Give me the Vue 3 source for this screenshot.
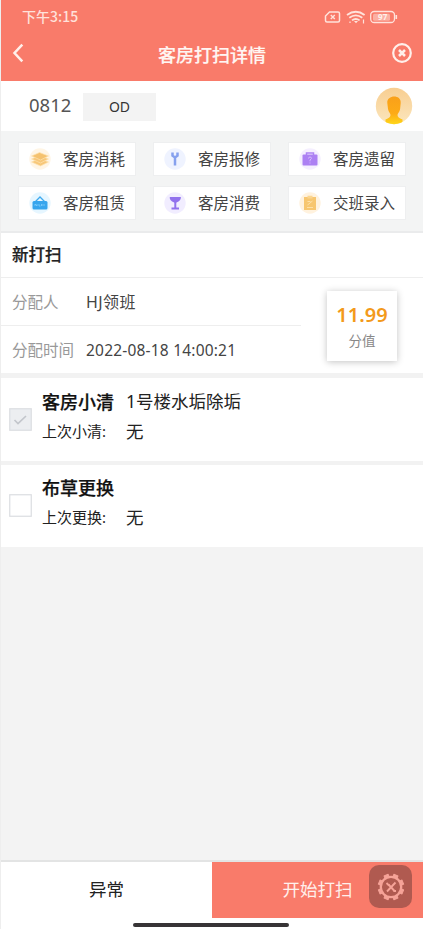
<script setup>
const actions = [
  { label: '客房消耗', icon: 'layers', tint: '#fff5e5' },
  { label: '客房报修', icon: 'wrench', tint: '#eff3ff' },
  { label: '客房遗留', icon: 'bag', tint: '#f5efff' },
  { label: '客房租赁', icon: 'rent', tint: '#e6f6ff' },
  { label: '客房消费', icon: 'glass', tint: '#f1edff' },
  { label: '交班录入', icon: 'note', tint: '#fff2de' },
]
const tasks = [
  { title: '客房小清', detail: '1号楼水垢除垢', last: '上次小清:', value: '无', checked: true },
  { title: '布草更换', detail: '', last: '上次更换:', value: '无', checked: false },
]
const teeth = [0, 45, 90, 135, 180, 225, 270, 315]
</script>

<template>
  <div class="screen">
    <header class="header">
      <div class="status">
        <span class="clock">下午3:15</span>
        <svg class="status-icons" width="74" height="16" viewBox="0 0 74 16" fill="none" stroke="#ffe3dc">
          <path d="M5.500 3H14q1.500 0 1.500 1.500v7q0 1.500-1.500 1.500H3q-1.500 0-1.500-1.500V7z" stroke-width="1.500" />
          <path d="m6.800 6 4 4m0-4-4 4" stroke-width="1.400" />
          <path d="M23 6q8.800-6.500 17.600 0M25.300 8.800q6.500-4.800 13 0M28 11.400q3.800-2.800 7.600 0" stroke-width="1.800" />
          <path d="m30 12 2 2.300 2-2.300z" fill="#ffe3dc" stroke="none" />
          <path d="M39.500 10.500v4M26 12.500v1.500" stroke-width="1.200" />
          <rect x="46.700" y="2.500" width="23.800" height="11" rx="3.500" stroke-width="1.300" />
          <rect x="49" y="4.700" width="17" height="7" rx="1.500" fill="#fbb0a3" stroke="none" />
          <path d="M72.300 6v4" stroke-width="1.600" />
          <text x="58.700" y="11.300" class="battery" text-anchor="middle">97</text>
        </svg>
      </div>
      <div class="nav">
        <svg width="12" height="20" viewBox="0 0 12 20" fill="none" stroke="#fff0eb" stroke-width="2.500"><path d="M10.300 1.700 2.500 10l7.800 8.300" /></svg>
        <h1>客房打扫详情</h1>
        <svg width="22" height="22" viewBox="0 0 22 22" fill="none" stroke="#fff0eb" stroke-width="2.200"><circle cx="11" cy="11" r="8.800" /><path d="m8 8 6 6m0-6-6 6" stroke-width="2.500" /></svg>
      </div>
    </header>

    <section class="room">
      <span class="number">0812</span>
      <span class="state">OD</span>
      <svg class="avatar" width="38" height="38" viewBox="0 0 38 38">
        <defs>
          <linearGradient id="face" x2="0" y2="1"><stop stop-color="#f9a01a" /><stop offset=".6" stop-color="#fdab16" /><stop offset="1" stop-color="#ffda19" /></linearGradient>
          <linearGradient id="halo" x2="0" y2="1"><stop stop-color="#f8ce91" /><stop offset="1" stop-color="#fbe6bd" /></linearGradient>
          <clipPath id="disc"><circle cx="19" cy="19" r="18.200" /></clipPath>
        </defs>
        <circle cx="19" cy="19" r="18.200" fill="url(#halo)" />
        <path clip-path="url(#disc)" d="M12.300 16c-.8-8 14-9 13.400 0l-.6 6c-.4 3-2.500 4-2.600 6 0 2 1.500 3 5 4.500V38H10.500v-5.500c3.500-1.500 5-2.500 5-4.500 0-2-2-3-2.500-6z" fill="url(#face)" />
      </svg>
    </section>

    <section class="actions">
      <div v-for="a in actions" :key="a.label" class="action">
        <svg width="22" height="22" viewBox="0 0 22 22" fill="none">
          <circle cx="11" cy="11" r="10.700" :fill="a.tint" />
          <g v-if="a.icon === 'layers'" stroke="#fde3b0" stroke-width=".7">
            <path d="m2.500 14 8-3.500 9 3.500-8 4z" fill="#f7c779" /><path d="m2.500 11 8-3.500 9 3.500-8 4z" fill="#f7c779" /><path d="m2.500 8 8-3.500 9 3.500-8 4z" fill="#f5c26f" />
          </g>
          <path v-else-if="a.icon === 'wrench'" d="M8.500 4.500v3.200L11 9.500l2.500-1.800V4.500M11 9v8.500" stroke="#86a1ee" stroke-width="2.500" />
          <g v-else-if="a.icon === 'bag'"><path d="M7.500 7V5h7v2" stroke="#ad82f3" stroke-width="1.500" /><rect x="3.500" y="6.500" width="15" height="11" rx="1" fill="#ac80f3" /><path d="M9.500 10.500q0-1.500 1.500-1.500t1.500 1.500L11 12v1.300M11 14.500v1" stroke="#d4b9fc" /></g>
          <g v-else-if="a.icon === 'rent'"><path d="m6.500 9.500 4.500-4.500 4.500 4.500" stroke="#3da9ee" stroke-width="1.300" /><rect x="3.500" y="9" width="15" height="8.500" rx="1.500" fill="#36a5ed" /><path d="M6 14v-2l2 2v-2m2 0v2h1.500m1-2v2m0-1h1.500m1-1v2" stroke="#7fcdfb" stroke-width=".8" /></g>
          <g v-else-if="a.icon === 'glass'"><path d="M5.800 5h11c.5 3-2.500 5-5.500 6-3-1-6-3-5.500-6z" fill="#9272ed" /><path d="M11.300 10v6M7.500 16.500h7.500" stroke="#9272ed" stroke-width="2" /></g>
          <g v-else><path d="M5 5h12v13H5z" fill="#f7c66f" /><path d="M8.500 3.700h5v2.800h-5z" fill="#fbd58f" /><path d="m8.500 13 5-4M8.500 9.500h3M8 15.500h6" stroke="#fde0a7" /></g>
        </svg>
        <span>{{ a.label }}</span>
      </div>
    </section>

    <section class="info">
      <h2>新打扫</h2>
      <div class="info-body">
        <dl>
          <div class="row"><dt>分配人</dt><dd class="person">HJ领班</dd></div>
          <div class="row"><dt>分配时间</dt><dd class="date">2022-08-18 14:00:21</dd></div>
        </dl>
        <div class="score"><strong>11.99</strong><span>分值</span></div>
      </div>
    </section>

    <section v-for="t in tasks" :key="t.title" class="task">
      <svg width="23" height="23" viewBox="0 0 23 23"><rect x=".75" y=".75" width="21.500" height="21.500" :fill="t.checked ? '#eceef1' : '#fff'" stroke="#dbdde1" stroke-width="1.200" /><path v-if="t.checked" d="m5.500 12 3.500 3.500 8-7.500" fill="none" stroke="#c3c6cc" stroke-width="1.700" /></svg>
      <div class="task-text">
        <div class="line"><b>{{ t.title }}</b><span class="detail">{{ t.detail }}</span></div>
        <div class="line last"><em>{{ t.last }}</em><span>{{ t.value }}</span></div>
      </div>
    </section>

    <footer class="footer">
      <button class="abnormal">异常</button>
      <button class="start">开始打扫</button>
      <div class="tool">
        <svg width="30" height="30" viewBox="0 0 30 30" fill="none" stroke="#f6a398">
          <circle cx="15" cy="15" r="10.200" stroke-width="2.300" />
          <path v-for="t in teeth" :key="t" d="M12.800 4.500v-2.300h4.400v2.300z" fill="#f6a398" stroke-width="1" stroke-linejoin="round" :transform="`rotate(${t + 22.5} 15 15)`" />
          <path d="m12.500 12.500 6 6.500M19.500 10.500l-8.500 9" stroke-width="1.900" /><path d="m10.500 11 2.500 2.500M17.500 19h2.500" stroke-width="1.800" />
        </svg>
      </div>
      <div class="home-bar"></div>
    </footer>
  </div>
</template>

<style>
body { margin: 0; background: #f3f3f3; }
</style>

<style scoped>
* { box-sizing: border-box; }
.screen { width: 423px; height: 929px; display: flex; flex-direction: column; border-left: 1px solid #eee; background: #f3f3f3; font-family: "Noto Sans", "Noto Sans CJK SC", sans-serif; color: #333; overflow: hidden; white-space: nowrap; }
.header { height: 81px; background: #f97b6a; flex: none; }
.status { height: 33px; display: flex; justify-content: space-between; align-items: center; padding: 0 25px 0 21px; color: #ffe1da; }
.clock { font-size: 14px; line-height: 20px; padding-bottom: 2px; font-weight: 500; font-family: "Noto Sans CJK SC", sans-serif; }
.battery { font: 700 8px "Noto Sans", sans-serif; fill: #fff0eb; stroke: none; }
.nav { height: 40px; display: flex; align-items: center; justify-content: space-between; padding: 0 10px 0 11px; }
.nav h1 { margin: 3px 0 0 9px; font-size: 18px; line-height: 26px; font-weight: 500; color: #fff6f3; -webkit-text-stroke: .2px #fff6f3; }
.room { height: 50px; background: #fff; display: flex; align-items: center; flex: none; padding: 0 10px 0 28px; }
.number { font-size: 18.500px; line-height: 26px; padding-bottom: 3px; color: #555; width: 54px; }
.state { width: 73px; height: 28px; margin-top: 1px; background: #f3f3f3; font-size: 14px; line-height: 28px; text-align: center; color: #333; }
.avatar { margin-left: auto; }
.actions { height: 100px; flex: none; background: #f3f4f4; display: grid; grid-template-columns: repeat(3, 118px); grid-auto-rows: 34px; gap: 10px 17px; padding: 11px 0 0 17px; }
.action { background: #fff; border: 1px solid #eeeff0; display: flex; align-items: center; gap: 12px; padding-left: 10px; font-size: 15.500px; line-height: 22px; color: #444; }
.info { height: 142px; background: #fff; border-top: 2px solid #eaebec; flex: none; }
.info h2 { margin: 0; height: 45px; padding-left: 11px; font-size: 16.500px; line-height: 44px; font-weight: 500; border-bottom: 1px solid #eee; color: #222; -webkit-text-stroke: .25px #222; }
.info-body { display: flex; height: 95px; }
dl { width: 300px; margin: 0; }
.row { height: 48px; display: flex; align-items: center; padding-left: 11px; border-bottom: 1px solid #eee; font-size: 15.500px; line-height: 22px; }
.row:last-child { height: 47px; border: 0; }
dt { width: 74px; color: #999; }
dd { margin: 0; color: #444; font-size: 15.500px; }
dd.person { font-size: 16px; letter-spacing: .4px; }
dd.date { letter-spacing: .2px; }
.score { margin: 13px 0 0 26px; width: 70px; height: 70px; background: #fff; box-shadow: 0 1px 7px rgba(0,0,0,.24); display: flex; flex-direction: column; align-items: center; padding-top: 9px; }
.score strong { color: #f39a1b; font-size: 20px; line-height: 30px; font-weight: 600; }
.score span { color: #888; font-size: 13.500px; line-height: 23px; }
.task { height: 86px; flex: none; background: #fff; border-top: 4px solid #f2f2f2; display: flex; padding-left: 8px; }
.info + .task { border-top-width: 5px; height: 88px; }
.task > svg { margin-top: 29px; flex: none; }
.info + .task > svg { margin-top: 30px; }
.task-text { margin-left: 10px; padding-top: 7px; }
.info + .task .task-text { padding-top: 8px; }
.line { display: flex; align-items: center; height: 29px; color: #222; }
.line.last { height: 30px; }
.line b { width: 84px; font-size: 18px; font-weight: 500; color: #111; -webkit-text-stroke: .25px #111; }
.line span { font-size: 17.500px; }
.line em { width: 84px; font-size: 15px; font-style: normal; }
.footer { margin-top: auto; height: 69px; flex: none; background: #fff; border-top: 2px solid #e3e4e4; display: flex; position: relative; }
.footer button { border: 0; margin: 0; padding: 0 0 3px; height: 56px; font: 17.500px "Noto Sans", "Noto Sans CJK SC", sans-serif; }
.abnormal { width: 211px; background: #fff; color: #222; }
.start { width: 211px; background: #f97b6a; color: #fff0ec; }
.tool { position: absolute; left: 368px; top: 3px; width: 43px; height: 43px; border-radius: 10px; background: #b05a50; display: flex; align-items: center; justify-content: center; }
.home-bar { position: absolute; left: 132px; bottom: 2px; width: 156px; height: 4px; border-radius: 2px; background: #373436; }
</style>
